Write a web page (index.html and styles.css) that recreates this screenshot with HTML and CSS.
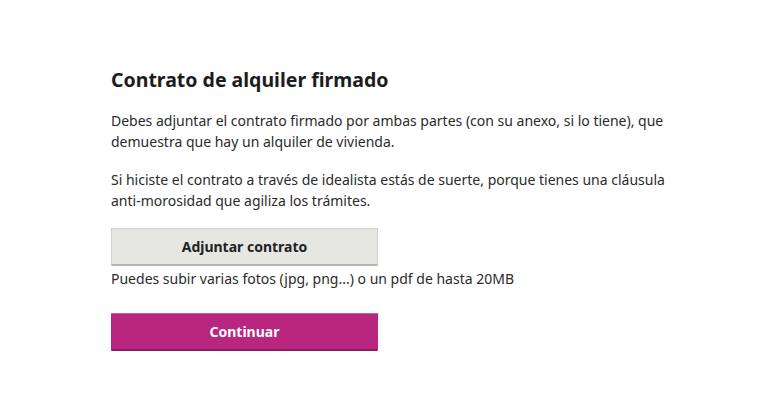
FILE: index.html
```html
<!DOCTYPE html>
<html lang="es">
<head>
<meta charset="utf-8">
<title>Contrato de alquiler firmado</title>
<link rel="stylesheet" href="styles.css">
</head>
<body>
<main class="page">
  <section class="card">
    <h1 class="title">Contrato de alquiler firmado</h1>
    <p class="text">Debes adjuntar el contrato firmado por ambas partes (con su anexo, si lo tiene), que demuestra que hay un alquiler de vivienda.</p>
    <p class="text">Si hiciste el contrato a través de idealista estás de suerte, porque tienes una cláusula anti-morosidad que agiliza los trámites.</p>
    <button class="btn btn-secondary" type="button">Adjuntar contrato</button>
    <p class="hint">Puedes subir varias fotos (jpg, png...) o un pdf de hasta 20MB</p>
    <button class="btn btn-primary" type="button">Continuar</button>
  </section>
</main>
</body>
</html>
```
FILE: styles.css
```css
html, body {
  margin: 0;
  padding: 0;
  background: #ffffff;
}
body {
  font-family: "Noto Sans", "Open Sans", sans-serif;
  color: #2b2b2b;
}
.page {
  padding: 66px 0 0 111px;
}
.card {
  display: flex;
  flex-direction: column;
  align-items: flex-start;
  width: 580px;
}
.title {
  margin: 0 0 16px;
  font-size: 19.5px;
  line-height: 28px;
  font-weight: 700;
  color: #1c1c1c;
}
.text {
  margin: 0 0 17px;
  font-size: 14px;
  line-height: 21px;
}
.btn {
  width: 267px;
  height: 38px;
  font-family: inherit;
  font-size: 14px;
  font-weight: 700;
  border-radius: 1px;
  cursor: pointer;
}
.btn-secondary {
  margin-top: 0;
  background: #e6e6e3;
  color: #222222;
  border: 1px solid #cfcfcc;
  border-bottom: 2px solid #b4b4b1;
}
.hint {
  margin: 2px 0 24px;
  font-size: 14px;
  line-height: 21px;
}
.btn-primary {
  background: #b8267f;
  color: #ffffff;
  border: 1px solid #b8267f;
  border-top-color: #d15ba2;
  border-bottom: 2px solid #8c1a60;
}
```
